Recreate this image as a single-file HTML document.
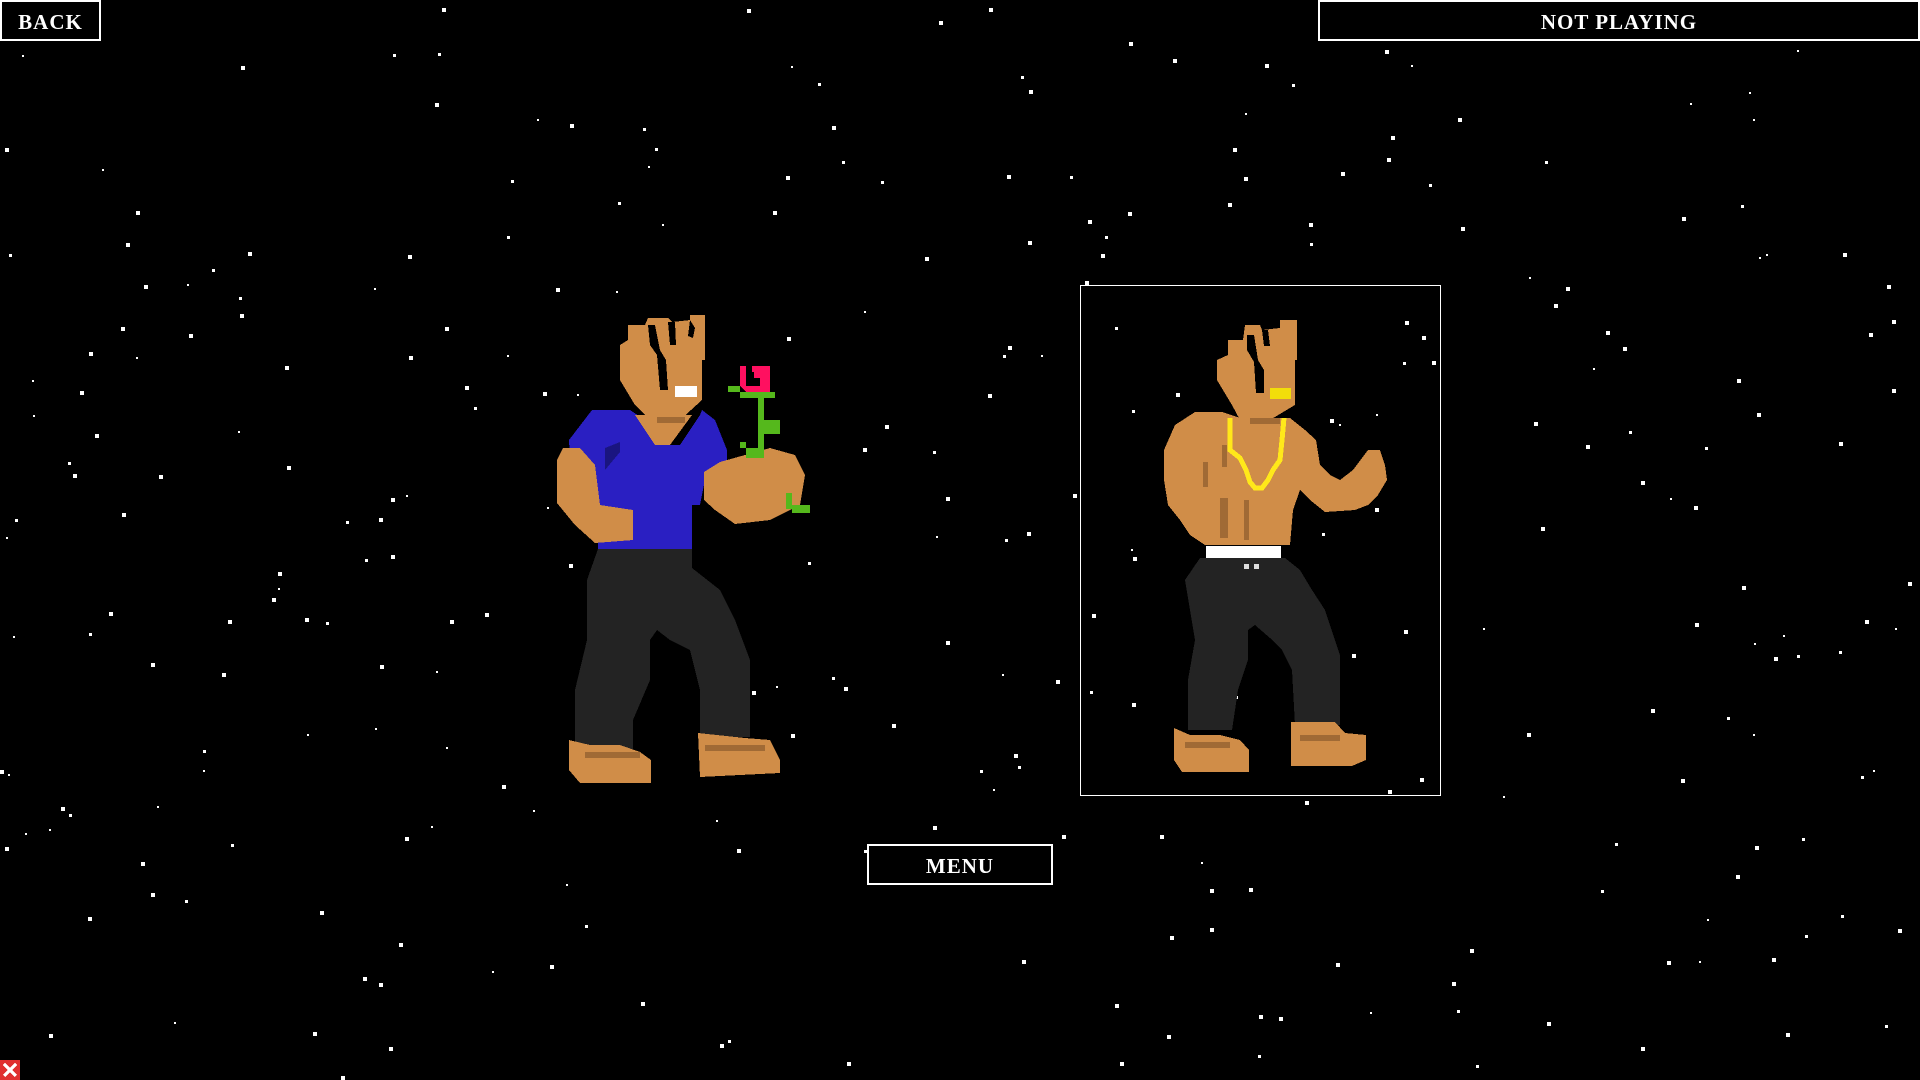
<!DOCTYPE html>
<html><head><meta charset="utf-8"><style>
html,body{margin:0;padding:0;background:#000;width:1920px;height:1080px;overflow:hidden;position:relative;font-family:"Liberation Serif",serif;}
.btn{position:absolute;border:2px solid #fff;box-sizing:border-box;color:#fff;font-weight:bold;font-size:21px;display:flex;align-items:center;justify-content:center;letter-spacing:1px;background:#000;padding-top:3px;}
svg{position:absolute;left:0;top:0;}
</style></head><body>
<svg width="1920" height="1080" id="stars"></svg>
<div class="btn" style="left:0;top:0;width:101px;height:41px;">BACK</div>
<div class="btn" style="left:1318px;top:0;width:602px;height:41px;">NOT PLAYING</div>
<div class="btn" style="left:867px;top:844px;width:186px;height:41px;">MENU</div>
<div style="position:absolute;left:1080px;top:285px;width:361px;height:511px;border:1px solid #fff;box-sizing:border-box;"></div>
<svg width="1920" height="1080" shape-rendering="crispEdges">
<g>
<polygon fill="#d08d48" points="620,380 620,345 628,340 628,325 645,325 648,318 668,318 672,322 690,320 690,315 705,315 705,360 702,360 702,400 680,420 650,420 635,405"/>
<polygon fill="#000" points="648,325 655,325 660,350 666,360 668,390 660,390 657,355 650,345"/>
<polygon fill="#000" points="668,322 675,322 676,345 670,345"/>
<polygon fill="#000" points="690,320 695,328 693,338 688,336"/>
<rect x="675" y="386" width="22" height="11" fill="#fff"/>
<polygon fill="#2a1fc2" points="592,410 630,410 645,420 660,445 680,445 700,415 702,410 715,420 727,450 727,470 705,480 700,505 692,505 692,549 598,549 598,510 570,460 569,440"/>
<polygon fill="#d08d48" points="635,415 692,415 670,445 655,445"/>
<rect x="657" y="417" width="28" height="6" fill="#a06a35"/>
<polygon fill="#1a1580" points="605,448 620,442 620,452 605,470"/>
<polygon fill="#d08d48" points="563,448 580,448 595,465 600,505 633,510 633,540 595,543 575,525 557,503 557,460"/>
<polygon fill="#d08d48" points="704,472 720,462 770,448 795,455 805,475 800,505 770,520 735,524 715,510 704,500"/>
<polygon fill="#232323" points="598,549 692,549 692,568 720,590 735,620 750,660 750,737 700,737 700,690 690,650 670,640 657,630 650,640 650,680 633,720 633,750 575,750 575,690 587,640 587,580"/>
<polygon fill="#d08d48" points="569,740 590,745 620,745 640,752 651,760 651,783 580,783 569,770"/>
<polygon fill="#d08d48" points="698,733 745,738 770,740 780,760 780,773 700,777"/>
<rect x="585" y="752" width="55" height="6" fill="#a06a35"/>
<rect x="705" y="745" width="60" height="6" fill="#a06a35"/>
<polygon fill="#ff1060" points="740,366 746,366 746,386 760,386 760,378 754,378 754,372 752,372 752,366 770,366 770,392 746,392 740,386"/>
<g fill="#55b81c"><rect x="728" y="386" width="12" height="6"/><rect x="740" y="392" width="35" height="6"/><rect x="758" y="398" width="6" height="50"/><rect x="764" y="420" width="16" height="14"/><rect x="740" y="442" width="6" height="6"/><rect x="746" y="448" width="18" height="10"/><rect x="786" y="493" width="6" height="16"/><rect x="792" y="505" width="18" height="8"/></g>
</g>
<g>
<polygon fill="#d08d48" points="1217,380 1217,360 1228,355 1228,340 1243,340 1245,325 1260,325 1262,330 1280,328 1280,320 1297,320 1297,360 1295,360 1295,405 1270,420 1240,420 1232,405"/>
<polygon fill="#000" points="1247,335 1254,335 1258,360 1264,370 1264,393 1256,393 1254,362 1247,350"/>
<polygon fill="#000" points="1262,330 1268,330 1270,346 1264,346"/>
<rect x="1270" y="388" width="21" height="11" fill="#f2dd0a"/>
<polygon fill="#d08d48" points="1195,412 1222,412 1240,418 1290,418 1305,430 1316,440 1320,465 1330,475 1340,480 1353,470 1368,450 1380,450 1385,465 1387,480 1378,495 1368,505 1355,510 1325,512 1310,500 1300,490 1293,510 1290,545 1205,545 1190,535 1180,520 1168,505 1164,480 1164,450 1175,425"/>
<polyline fill="none" stroke="#ffe81a" stroke-width="5" points="1230,418 1230,450 1240,458 1246,470 1250,482 1255,488 1262,488 1268,480 1273,470 1280,460 1282,440 1284,418"/>
<g fill="#a06a35"><rect x="1250" y="418" width="30" height="6"/><rect x="1222" y="445" width="5" height="22"/><rect x="1203" y="462" width="5" height="25"/><rect x="1220" y="498" width="8" height="40"/><rect x="1244" y="500" width="5" height="40"/></g>
<rect x="1206" y="546" width="75" height="12" fill="#fff"/>
<polygon fill="#232323" points="1200,558 1285,558 1300,570 1312,590 1325,610 1335,640 1340,655 1340,725 1295,725 1292,670 1282,650 1270,638 1255,625 1248,630 1248,660 1238,690 1232,730 1188,730 1188,680 1195,640 1190,610 1185,580"/>
<rect x="1244" y="564" width="5" height="5" fill="#ddd"/><rect x="1254" y="564" width="5" height="5" fill="#ddd"/>
<polygon fill="#d08d48" points="1174,728 1190,735 1220,735 1240,740 1249,750 1249,772 1182,772 1174,760"/>
<polygon fill="#d08d48" points="1291,722 1335,722 1345,733 1366,735 1366,760 1352,766 1291,766"/>
<rect x="1185" y="742" width="45" height="6" fill="#a06a35"/>
<rect x="1300" y="735" width="40" height="6" fill="#a06a35"/>
</g>
<rect x="0" y="1060" width="20" height="20" fill="#e03030"/>
<path d="M4 1064 L16 1076 M16 1064 L4 1076" stroke="#fff" stroke-width="3"/>
</svg>
<script>
(function(){var s=document.getElementById('stars');var seed=12345;function r(){seed=(seed*16807)%2147483647;return seed/2147483647;}
var h='';for(var i=0;i<320;i++){var x=Math.floor(r()*1920),y=Math.floor(r()*1080),z=r()<0.55?4:(r()<0.5?3:2);h+='<rect x="'+x+'" y="'+y+'" width="'+z+'" height="'+z+'" fill="#fff"/>';}
s.innerHTML=h;})();
</script>
</body></html>
